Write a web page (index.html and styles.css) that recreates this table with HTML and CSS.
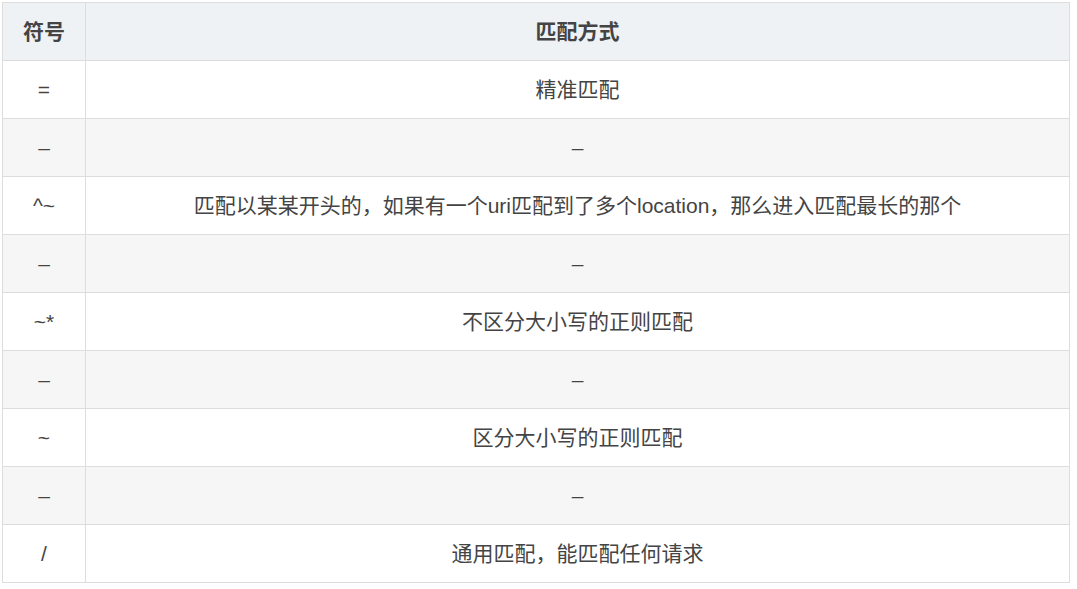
FILE: index.html
```html
<!DOCTYPE html>
<html lang="zh-CN">
<head>
<meta charset="utf-8">
<title>匹配方式</title>
<link rel="stylesheet" href="styles.css">
</head>
<body>
<table class="match-table">
  <thead>
    <tr><th class="col-sym">符号</th><th>匹配方式</th></tr>
  </thead>
  <tbody>
    <tr><td>=</td><td>精准匹配</td></tr>
    <tr class="alt"><td>–</td><td>–</td></tr>
    <tr><td>^~</td><td>匹配以某某开头的，如果有一个uri匹配到了多个location，那么进入匹配最长的那个</td></tr>
    <tr class="alt"><td>–</td><td>–</td></tr>
    <tr><td>~*</td><td>不区分大小写的正则匹配</td></tr>
    <tr class="alt"><td>–</td><td>–</td></tr>
    <tr><td>~</td><td>区分大小写的正则匹配</td></tr>
    <tr class="alt"><td>–</td><td>–</td></tr>
    <tr><td>/</td><td>通用匹配，能匹配任何请求</td></tr>
  </tbody>
</table>
</body>
</html>
```
FILE: styles.css
```css
html, body {
  margin: 0;
  background: #ffffff;
}
body {
  padding: 2px;
  font-family: "Liberation Sans", "Noto Sans CJK SC", sans-serif;
  font-size: 21px;
  color: #444444;
}
.match-table {
  border-collapse: collapse;
  width: 1068px;
  table-layout: fixed;
}
.match-table th,
.match-table td {
  border: 1px solid #dddddd;
  height: 58px;
  padding: 0 8px;
  text-align: center;
  vertical-align: middle;
  line-height: 1.2;
  box-sizing: border-box;
}
.match-table th {
  background: #eef2f5;
  font-weight: bold;
  color: #444444;
}
.match-table .col-sym {
  width: 83px;
}
.match-table tr.alt td {
  background: #f6f6f6;
}
```
